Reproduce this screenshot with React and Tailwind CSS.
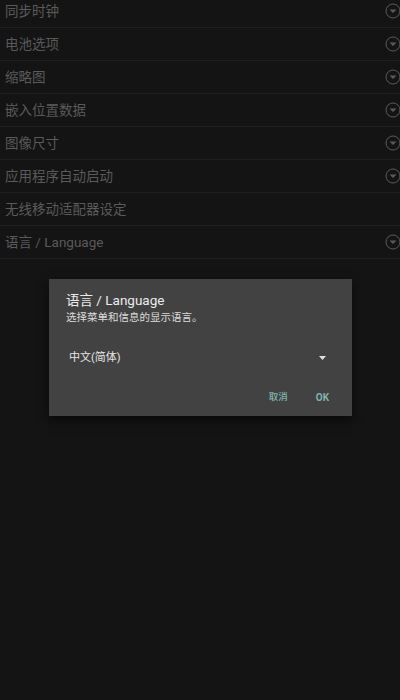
import React from 'react';

const items = [
  { label: '同步时钟', icon: true },
  { label: '电池选项', icon: true },
  { label: '缩略图', icon: true },
  { label: '嵌入位置数据', icon: true },
  { label: '图像尺寸', icon: true },
  { label: '应用程序自动启动', icon: true },
  { label: '无线移动适配器设定', icon: false },
  { label: '语言 / Language', icon: true },
];

const font = { fontFamily: 'Roboto, "Noto Sans CJK SC", sans-serif' };

function DropIcon() {
  return (
    <svg width="16" height="16" viewBox="0 0 16 16" className="shrink-0">
      <circle cx="8" cy="8" r="7" fill="none" stroke="#5a5a5a" strokeWidth="1" />
      <path d="M4.5 6.5 L11.5 6.5 L8 10 Z" fill="#5a5a5a" />
    </svg>
  );
}

export default function App() {
  return (
    <div className="relative h-[700px] w-[400px] overflow-hidden bg-[#141414]" style={font}>
      <div className="-mt-[5px]">
        {items.map((it) => (
          <div key={it.label} className="flex h-[33px] items-center justify-between border-b border-[#1f1f1f] pl-[5px] -mr-[1px]">
            <span className="text-[13.5px] text-[#5a5a5a]">{it.label}</span>
            {it.icon && <DropIcon />}
          </div>
        ))}
      </div>

      <div className="absolute left-[49px] top-[279px] flex h-[137px] w-[303px] flex-col bg-[#424242] shadow-[0_4px_10px_rgba(0,0,0,0.6)]">
        <div className="px-[17px] pt-[12px]">
          <div className="text-[13.5px] leading-[18px] text-[#ececec]">语言 / Language</div>
          <div className="mt-[2px] text-[10.5px] leading-[14px] text-[#dcdcdc]">选择菜单和信息的显示语言。</div>
        </div>
        <div className="mt-[26px] flex items-center justify-between pl-[20px] pr-[26px]">
          <span className="text-[11px] leading-[14px] text-[#e6e6e6]">中文(简体)</span>
          <svg width="7" height="4" viewBox="0 0 7 4">
            <path d="M0 0 L7 0 L3.5 4 Z" fill="#e0e0e0" />
          </svg>
        </div>
        <div className="mt-auto mb-[11px] flex items-center justify-end gap-[28px] pr-[23px]">
          <span className="text-[9.5px] font-medium text-[#7fb3ad]">取消</span>
          <span className="text-[10px] font-bold text-[#7fb3ad]">OK</span>
        </div>
      </div>
    </div>
  );
}
